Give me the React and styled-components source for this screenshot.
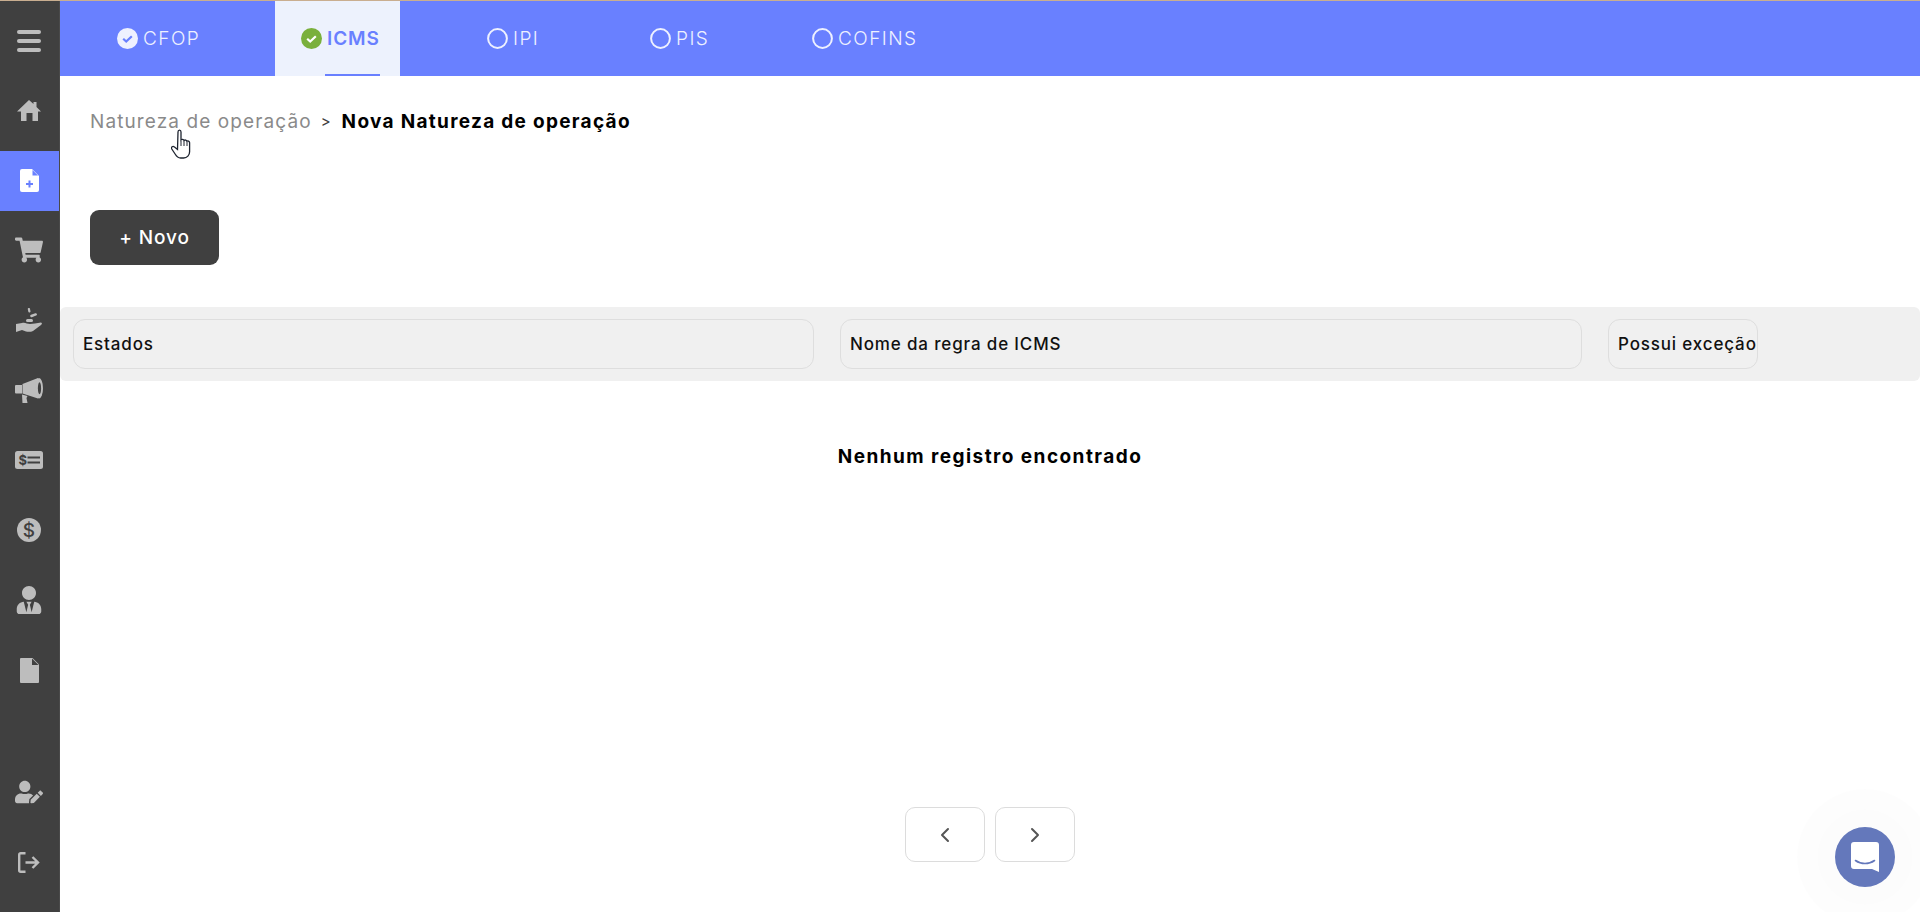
import React from 'react';
import styled, { createGlobalStyle } from 'styled-components';
import { FaShoppingCart, FaUserTie, FaUserEdit } from 'react-icons/fa';
import { LuChevronLeft, LuChevronRight } from 'react-icons/lu';

const GlobalStyle = createGlobalStyle`
  html, body {
    margin: 0;
    height: 100%;
    background: #fff;
    overflow: hidden;
  }
  * {
    box-sizing: border-box;
  }
  body {
    font-family: "Inter", "Noto Sans", sans-serif;
  }
`;

const TopLine = styled.div`
  height: 1px;
  background: #c9ae90;
`;

const Shell = styled.div`
  display: flex;
  height: 911px;
`;

const Sidebar = styled.nav`
  width: 60px;
  flex: none;
  display: flex;
  flex-direction: column;
  background: #404040;
  border-right: 1px solid #4a4a4a;
  padding-bottom: 14px;
`;

const MenuSlot = styled.div`
  height: 75px;
  display: flex;
  align-items: center;
  justify-content: center;
  padding-top: 4px;
`;

const Burger = styled.div`
  width: 24px;
  display: flex;
  flex-direction: column;
  gap: 5px;
  margin-left: -2px;
  span {
    height: 4px;
    border-radius: 2px;
    background: #bdbdbd;
  }
`;

const NavSlot = styled.div`
  height: 70px;
  display: flex;
  align-items: center;
`;

const NavItem = styled.div`
  width: 59px;
  height: 60px;
  padding: 0 1px 2px 0;
  display: flex;
  align-items: center;
  justify-content: center;
  background: ${(p) => (p.$active ? '#6980ff' : 'transparent')};
  color: ${(p) => (p.$active ? '#fff' : '#bdbdbd')};
`;

const NavBottom = styled.div`
  margin-top: auto;
`;

const Main = styled.main`
  flex: 1;
  min-width: 0;
  display: flex;
  flex-direction: column;
`;

const TabBar = styled.div`
  height: 75px;
  flex: none;
  display: flex;
  background: #6980ff;
`;

const Tab = styled.div`
  position: relative;
  width: ${(p) => p.$w}px;
  padding-left: ${(p) => p.$pad}px;
  display: flex;
  align-items: center;
  gap: 5px;
  font-size: 19px;
  letter-spacing: ${(p) => (p.$active ? 0.9 : 1.45)}px;
  font-weight: ${(p) => (p.$active ? 600 : 300)};
  color: ${(p) => (p.$active ? '#6980ff' : '#eef1ff')};
  background: ${(p) => (p.$active ? '#edf2fd' : 'transparent')};
`;

const TabLine = styled.span`
  position: absolute;
  left: 50px;
  bottom: 0;
  width: 55px;
  height: 2px;
  background: #6980ff;
`;

const Crumbs = styled.div`
  display: flex;
  align-items: center;
  height: 24px;
  margin: 33px 0 0 30px;
  padding-top: 1px;
  font-size: 19px;
`;

const CrumbLink = styled.span`
  color: #8a8a8a;
  font-weight: 400;
  letter-spacing: 1.1px;
`;

const CrumbSep = styled.span`
  color: #404040;
  margin: 0 11px 0 9px;
  font-size: 15px;
`;

const CrumbCurrent = styled.span`
  color: #000;
  font-weight: 700;
  letter-spacing: 1.3px;
`;

const NewButton = styled.button`
  align-self: flex-start;
  width: 129px;
  height: 55px;
  margin: 77px 0 0 30px;
  border: none;
  border-radius: 9px;
  background: #404040;
  color: #fff;
  font: 500 19px "Inter", sans-serif;
  letter-spacing: 0.9px;
`;

const HeaderRow = styled.div`
  display: flex;
  gap: 26px;
  height: 74px;
  margin-top: 42px;
  padding: 12px 13px;
  background: #f0f0f0;
  border-radius: 6px;
`;

const HeaderCell = styled.div`
  flex: none;
  width: ${(p) => p.$w}px;
  height: 50px;
  display: flex;
  align-items: center;
  padding-left: 9px;
  border: 1px solid #dedede;
  border-radius: 12px;
  font-size: 17px;
  font-weight: 500;
  letter-spacing: 0.85px;
  color: #111;
  white-space: nowrap;
`;

const EmptyText = styled.div`
  margin-top: 64px;
  text-align: center;
  width: 1860px;
  font-size: 19px;
  line-height: 24px;
  font-weight: 700;
  letter-spacing: 1.45px;
  color: #000;
`;

const Pager = styled.div`
  display: flex;
  justify-content: center;
  gap: 10px;
  margin-top: 338px;
  width: 1860px;
`;

const PageButton = styled.button`
  width: 80px;
  height: 55px;
  display: flex;
  align-items: center;
  justify-content: center;
  background: #fff;
  border: 1px solid #dcdcdc;
  border-radius: 10px;
  color: #555;
`;

const ChatBubble = styled.div`
  position: fixed;
  right: 25px;
  bottom: 25px;
  width: 60px;
  height: 60px;
  border-radius: 50%;
  display: flex;
  align-items: center;
  justify-content: center;
  background: #6478bb;
  box-shadow: 0 0 0 18px rgba(0, 0, 0, 0.006), 0 0 0 38px rgba(0, 0, 0, 0.006);
`;

const Cursor = styled.svg`
  position: fixed;
  left: 171px;
  top: 129px;
`;

const CheckIcon = ({ bg, tick }) => (
  <svg width="21" height="21" viewBox="0 0 21 21">
    <circle cx="10.5" cy="10.5" r="10.5" fill={bg} />
    <path d="M6.2 10.8l3 2.8 5.6-5.4" fill="none" stroke={tick} strokeWidth="2.2" />
  </svg>
);

const RingIcon = () => (
  <svg width="21" height="21" viewBox="0 0 21 21">
    <circle cx="10.5" cy="10.5" r="9.4" fill="none" stroke="#eef1ff" strokeWidth="2" />
  </svg>
);

const HomeIcon = () => (
  <svg width="24" height="21" viewBox="0 0 24 21" fill="currentColor">
    <path d="M12 0l4.500 4V2h3v5l4.500 4.500h-3V21h-5.500v-8h-6v8H4V11.500H0z" />
  </svg>
);

const FilePlus = () => (
  <svg width="19" height="23" viewBox="0 0 19 23">
    <path d="M2 0h10l7 7v14a2 2 0 0 1-2 2H2a2 2 0 0 1-2-2V2a2 2 0 0 1 2-2z" fill="#fff" />
    <path d="M12.500 1l5.500 5.500h-5.500z" fill="#6980ff" />
    <path d="M9.500 11.500v7M6 15h7" stroke="#6980ff" strokeWidth="2" />
  </svg>
);

const HandCoins = () => (
  <svg width="26" height="24" viewBox="0 0 26 24" fill="currentColor">
    <path d="M0 16l6-1c3-1 5 1 8 1l5-.5 6-1c1.500.5 1 2 0 2.500l-8 6c-2 1-5 1-7 .5L6 22l-6 2z" />
    <rect x="10" y="11" width="7" height="3" rx="1.500" />
    <rect x="14" y="6" width="7" height="2.500" rx="1.200" transform="rotate(-20 17.500 7)" />
    <rect x="12" y="0" width="2.200" height="4.500" rx="1" transform="rotate(-12 13 2)" />
  </svg>
);

const HornIcon = () => (
  <svg width="28" height="25" viewBox="0 0 28 25" fill="currentColor">
    <path d="M1 7h6v8.500H1a1 1 0 0 1-1-1V8a1 1 0 0 1 1-1z" />
    <path d="M7.500 6L23 0v20.500L7.500 15.500z" />
    <ellipse cx="24" cy="10.200" rx="4" ry="10.200" />
    <ellipse cx="24.500" cy="10.200" rx="1.600" ry="6" fill="#404040" />
    <path d="M7 16.500l5.500 1.500-1 2 1 5-5 .500z" />
  </svg>
);

const MoneyCard = () => (
  <svg width="28" height="18" viewBox="0 0 28 18">
    <rect width="28" height="18" rx="2.500" fill="currentColor" />
    <text x="3.500" y="14" fontSize="13" fontWeight="700" fontFamily="Inter, sans-serif" fill="#404040">$</text>
    <path d="M12.500 6.500h12.500M12.500 11.500h12.500" stroke="#404040" strokeWidth="2.200" />
  </svg>
);

const DollarCoin = () => (
  <svg width="24" height="24" viewBox="0 0 24 24">
    <circle cx="12" cy="12" r="12" fill="currentColor" />
    <text x="12" y="18.800" textAnchor="middle" fontSize="19" fontWeight="500" fontFamily="Inter, sans-serif" fill="#404040">$</text>
  </svg>
);

const FileIcon = () => (
  <svg width="19" height="25" viewBox="0 0 19 25">
    <path d="M0 1a1 1 0 0 1 1-1h11.500L19 6.500V24a1 1 0 0 1-1 1H1a1 1 0 0 1-1-1z" fill="currentColor" />
    <path d="M12 .5L18.500 7H12z" fill="#404040" />
  </svg>
);

const LogoutIcon = () => (
  <svg width="22" height="21" viewBox="0 0 22 21" fill="none" stroke="currentColor" strokeWidth="2.400">
    <path d="M7.500 1.200H2.700a1.500 1.500 0 0 0-1.500 1.500v15.600a1.500 1.500 0 0 0 1.500 1.500h4.800" />
    <path d="M7.500 10.500H20M14.500 5l5.500 5.500-5.500 5.500" />
  </svg>
);

const ChatIcon = () => (
  <svg width="28" height="30" viewBox="0 0 28 30">
    <path d="M3 0h22a3 3 0 0 1 3 3v27l-7-3H3a3 3 0 0 1-3-3V3a3 3 0 0 1 3-3z" fill="#fff" />
    <path d="M4.500 18.500c5.500 4 13.500 4 19 0" fill="none" stroke="#6478bb" strokeWidth="1.600" strokeLinecap="round" />
  </svg>
);

const navItems = [
  { key: 'home', icon: <HomeIcon /> },
  { key: 'doc', icon: <FilePlus />, active: true },
  { key: 'cart', icon: <FaShoppingCart size={28} /> },
  { key: 'hand', icon: <HandCoins /> },
  { key: 'horn', icon: <HornIcon /> },
  { key: 'card', icon: <MoneyCard /> },
  { key: 'coin', icon: <DollarCoin /> },
  { key: 'user', icon: <FaUserTie size={28} /> },
  { key: 'file', icon: <FileIcon /> },
];

const tabs = [
  { label: 'CFOP', w: 215, pad: 57, done: true },
  { label: 'ICMS', w: 125, pad: 26, done: true, active: true },
  { label: 'IPI', w: 163, pad: 87 },
  { label: 'PIS', w: 162, pad: 87 },
  { label: 'COFINS', w: 200, pad: 87 },
];

const App = () => {
  return (
    <>
      <GlobalStyle />
      <TopLine />
      <Shell>
        <Sidebar>
          <MenuSlot>
            <Burger>
              <span />
              <span />
              <span />
            </Burger>
          </MenuSlot>
          {navItems.map((item) => (
            <NavSlot key={item.key}>
              <NavItem $active={item.active}>{item.icon}</NavItem>
            </NavSlot>
          ))}
          <NavBottom>
            <NavSlot>
              <NavItem><FaUserEdit size={28} /></NavItem>
            </NavSlot>
            <NavSlot>
              <NavItem><LogoutIcon /></NavItem>
            </NavSlot>
          </NavBottom>
        </Sidebar>
        <Main>
          <TabBar>
            {tabs.map((tab) => (
              <Tab key={tab.label} $w={tab.w} $pad={tab.pad} $active={tab.active}>
                {tab.active ? (
                  <CheckIcon bg="#7ab03c" tick="#fff" />
                ) : tab.done ? (
                  <CheckIcon bg="#eef1ff" tick="#6980ff" />
                ) : (
                  <RingIcon />
                )}
                {tab.label}
                {tab.active && <TabLine />}
              </Tab>
            ))}
          </TabBar>
          <Crumbs>
            <CrumbLink>Natureza de operação</CrumbLink>
            <CrumbSep>&gt;</CrumbSep>
            <CrumbCurrent>Nova Natureza de operação</CrumbCurrent>
          </Crumbs>
          <NewButton>+ Novo</NewButton>
          <HeaderRow>
            <HeaderCell $w={741}>Estados</HeaderCell>
            <HeaderCell $w={742}>Nome da regra de ICMS</HeaderCell>
            <HeaderCell $w={150}>Possui exceção</HeaderCell>
          </HeaderRow>
          <EmptyText>Nenhum registro encontrado</EmptyText>
          <Pager>
            <PageButton><LuChevronLeft size={24} /></PageButton>
            <PageButton><LuChevronRight size={24} /></PageButton>
          </Pager>
        </Main>
      </Shell>
      <ChatBubble><ChatIcon /></ChatBubble>
      <Cursor width="24" height="32" viewBox="0 0 24 32">
        <path
          d="M7 3c0-2.600 3-2.600 3 0v8c1-1 2.500-.8 3 .4 1-.8 2.400-.4 2.800.8 1-.5 2.600 0 2.800 1.500v9c0 3.500-2.500 6.300-6 6.300h-3c-2.500 0-4-1.500-5.500-4l-3.300-5c-1-2 1-3.500 2.700-2l3 2.500z"
          fill="#fff"
          stroke="#1e2430"
          strokeWidth="1.300"
        />
        <path d="M10 12v5M13 12v5M16 13v4" stroke="#1e2430" strokeWidth="1" />
      </Cursor>
    </>
  );
};

export default App;
